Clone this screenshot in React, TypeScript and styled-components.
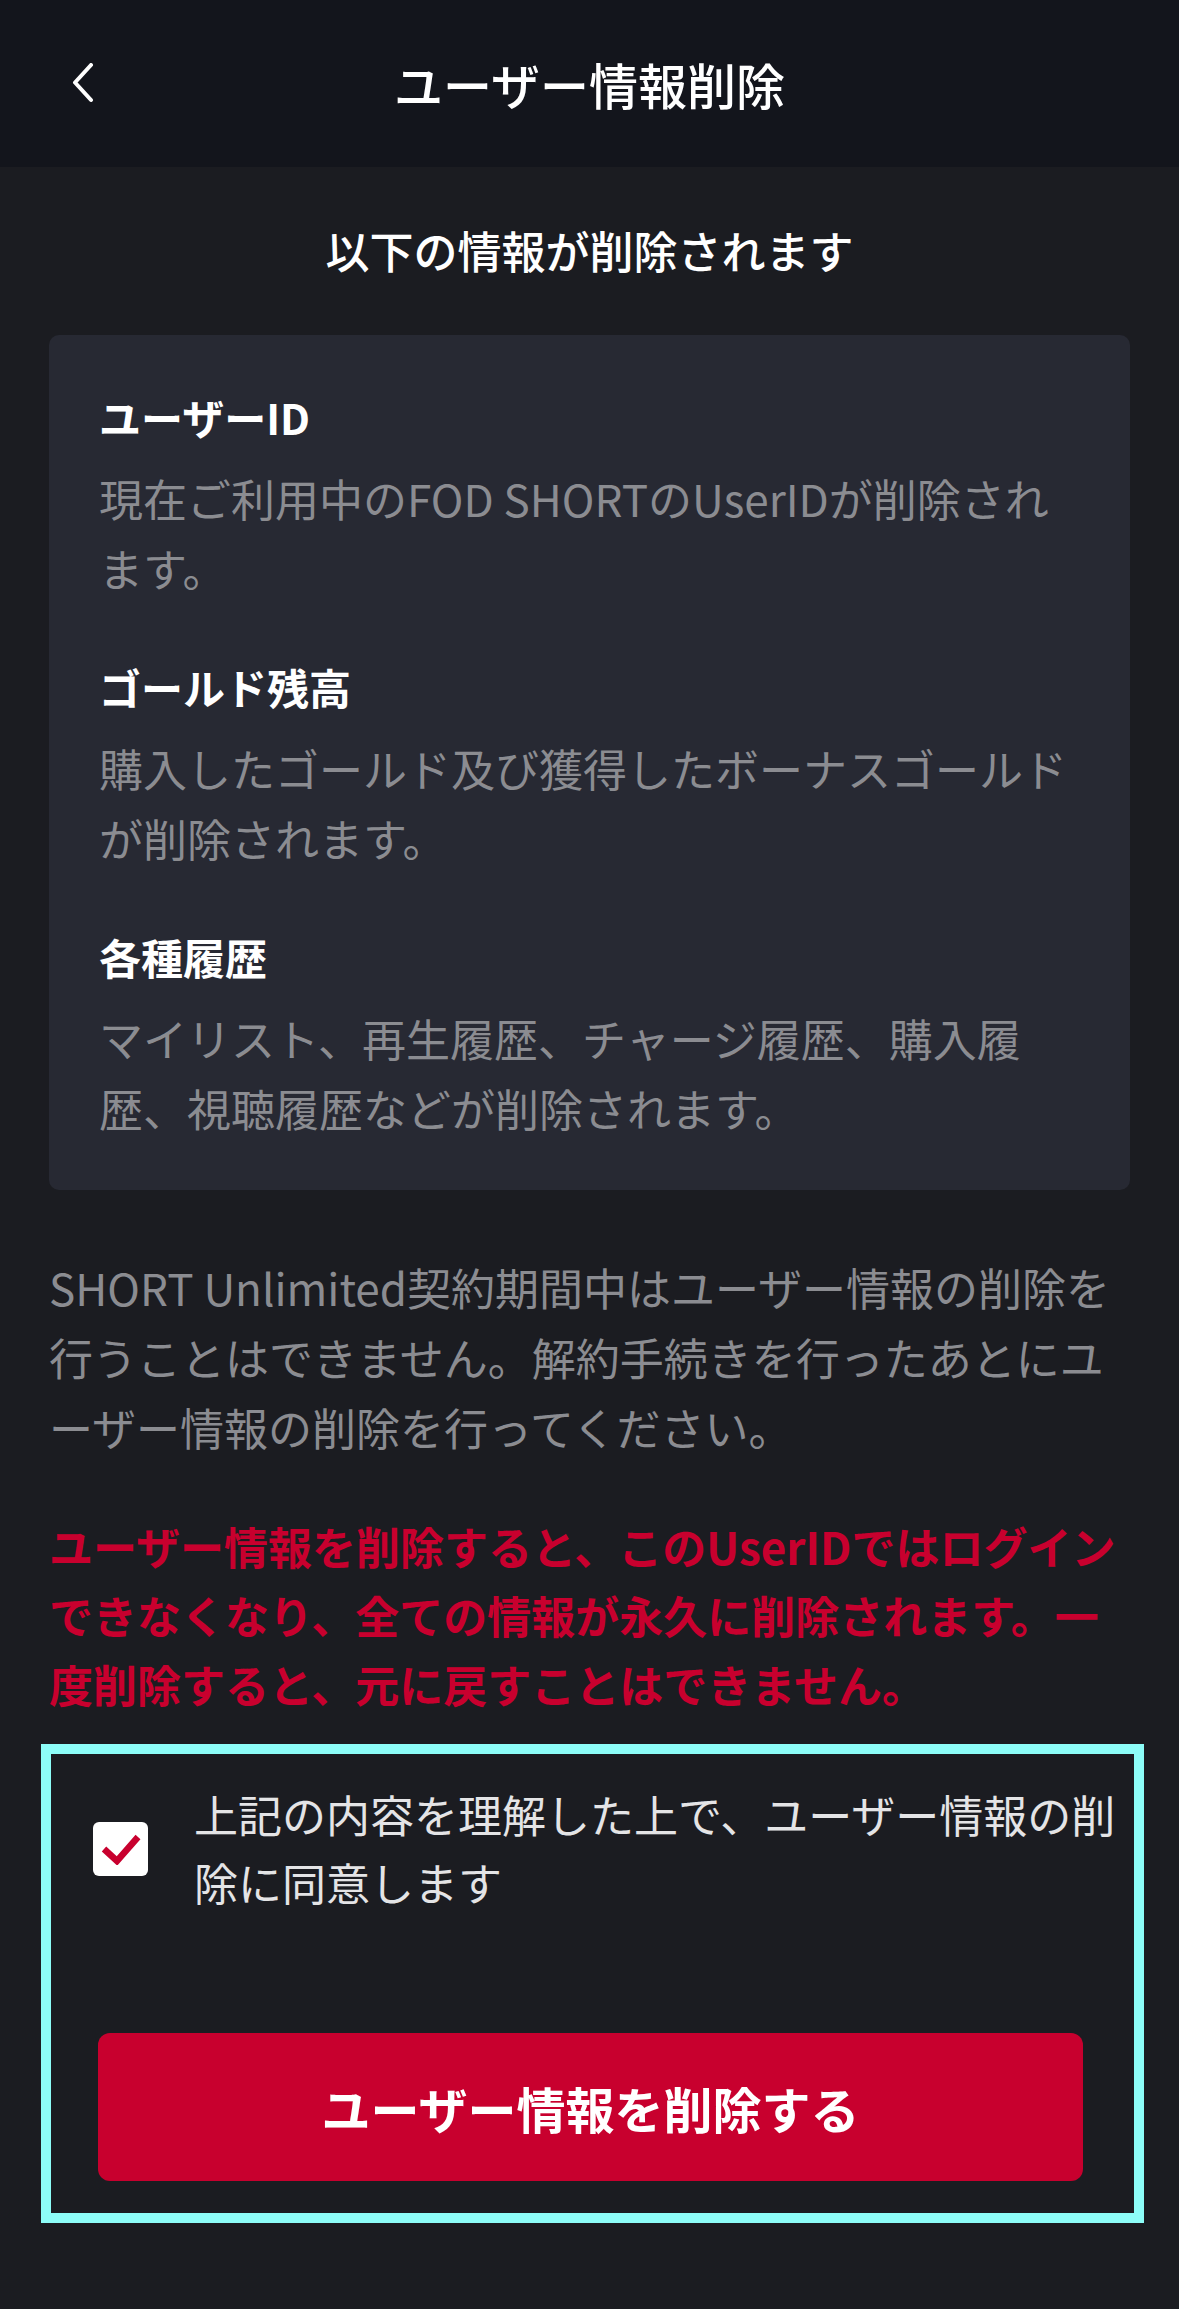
import styled, { createGlobalStyle } from 'styled-components'

const Colors = {
  Header: '#13151c',
  Page: '#1b1c21',
  Card: '#272933',
  White: '#ffffff',
  Soft: '#e4e4e6',
  Grey: '#8b8c91',
  Red: '#c8002e',
  Focus: '#8dfdf8',
}

const GlobalStyle = createGlobalStyle`
  html, body {
    margin: 0;
    padding: 0;
    background: ${Colors.Page};
  }
  body {
    font-family: "Noto Sans CJK JP", "Noto Sans", sans-serif;
    color: ${Colors.White};
    -webkit-font-smoothing: antialiased;
  }
`

interface InfoItem {
  title: string
  description: string
}

const deletedItems: InfoItem[] = [
  { title: 'ユーザーID', description: '現在ご利用中のFOD SHORTのUserIDが削除されます。' },
  { title: 'ゴールド残高', description: '購入したゴールド及び獲得したボーナスゴールドが削除されます。' },
  { title: '各種履歴', description: 'マイリスト、再生履歴、チャージ履歴、購入履歴、視聴履歴などが削除されます。' },
]

const BackIcon = () => (
  <svg width="22" height="40" viewBox="0 0 22 40" fill="none">
    <polyline
      points="19,2 3,19.5 19,37"
      stroke={Colors.White}
      strokeWidth="4"
      strokeLinecap="round"
      strokeLinejoin="round"
    />
  </svg>
)

const CheckMark = () => (
  <svg width="40" height="32" viewBox="0 0 40 32" fill="none">
    <polyline points="3,16 16,28 37,4" stroke={Colors.Red} strokeWidth="6.5" strokeLinejoin="miter" />
  </svg>
)

export default function App() {
  return (
    <>
      <GlobalStyle />
      <Screen>
        <Header>
          <BackButton aria-label="戻る">
            <BackIcon />
          </BackButton>
          <HeaderTitle>ユーザー情報削除</HeaderTitle>
          <span />
        </Header>

        <Main>
          <Lead>以下の情報が削除されます</Lead>

          <InfoCard>
            {deletedItems.map((item) => (
              <InfoSection key={item.title}>
                <InfoTitle>{item.title}</InfoTitle>
                <InfoText>{item.description}</InfoText>
              </InfoSection>
            ))}
          </InfoCard>

          <Notice>
            SHORT Unlimited契約期間中はユーザー情報の削除を行うことはできません。解約手続きを行ったあとにユーザー情報の削除を行ってください。
          </Notice>

          <Warning>
            ユーザー情報を削除すると、このUserIDではログインできなくなり、全ての情報が永久に削除されます。一度削除すると、元に戻すことはできません。
          </Warning>

          <ConsentPanel>
            <ConsentRow>
              <CheckBox $checked>
                <CheckMark />
              </CheckBox>
              <ConsentText>上記の内容を理解した上で、ユーザー情報の削除に同意します</ConsentText>
            </ConsentRow>
            <DeleteButton type="button">ユーザー情報を削除する</DeleteButton>
          </ConsentPanel>
        </Main>
      </Screen>
    </>
  )
}

const Screen = styled.div`
  min-height: 2309px;
  background: ${Colors.Page};
`

const Header = styled.header`
  display: grid;
  grid-template-columns: 1fr auto 1fr;
  align-items: center;
  height: 167px;
  background: ${Colors.Header};
`

const BackButton = styled.button`
  justify-self: start;
  display: flex;
  align-items: center;
  margin: 0 0 1px 72px;
  padding: 0;
  border: none;
  background: none;
  cursor: pointer;
`

const HeaderTitle = styled.h1`
  margin: 0;
  font-size: 49px;
  font-weight: 500;
  line-height: 1;
  letter-spacing: 0;
`

const Main = styled.main`
  display: flex;
  flex-direction: column;
  padding: 0 49px;
`

const Lead = styled.h2`
  margin: 51px 0 0;
  font-size: 44px;
  font-weight: 500;
  line-height: 64px;
  text-align: center;
`

const InfoCard = styled.section`
  display: flex;
  flex-direction: column;
  gap: 54px;
  margin-top: 53px;
  padding: 52px 50px 47px;
  background: ${Colors.Card};
  border-radius: 10px;
`

const InfoSection = styled.div`
  display: flex;
  flex-direction: column;
  gap: 16px;
`

const InfoTitle = styled.h3`
  margin: 0;
  font-size: 42px;
  font-weight: 700;
  line-height: 60px;
`

const BodyText = styled.p`
  margin: 0;
  font-size: 44px;
  line-height: 70px;
`

const InfoText = styled(BodyText)`
  color: ${Colors.Grey};
`

const Notice = styled(BodyText)`
  margin-top: 62px;
  color: ${Colors.Grey};
`

const Warning = styled(BodyText)`
  margin-top: 50px;
  color: ${Colors.Red};
  font-weight: 700;
  line-height: 69px;
`

const ConsentPanel = styled.section`
  display: flex;
  flex-direction: column;
  margin: 25px -14px 0 -8px;
  padding: 26px 0 32px;
  border: 10px solid ${Colors.Focus};
`

const ConsentRow = styled.label`
  display: flex;
  align-items: center;
  gap: 46px;
  padding: 0 4px 0 42px;
  cursor: pointer;
`

const CheckBox = styled.span<{ $checked: boolean }>`
  flex: none;
  display: flex;
  align-items: center;
  justify-content: center;
  width: 55px;
  height: 54px;
  margin-top: 2px;
  border-radius: 6px;
  background: ${Colors.White};

  svg {
    visibility: ${({ $checked }) => ($checked ? 'visible' : 'hidden')};
  }
`

const ConsentText = styled.span`
  font-size: 44px;
  line-height: 68px;
  color: ${Colors.Soft};
`

const DeleteButton = styled.button`
  height: 148px;
  margin: 117px 51px 0 47px;
  border: none;
  border-radius: 12px;
  background: ${Colors.Red};
  color: ${Colors.White};
  font-family: inherit;
  font-size: 49px;
  font-weight: 700;
  cursor: pointer;
`
